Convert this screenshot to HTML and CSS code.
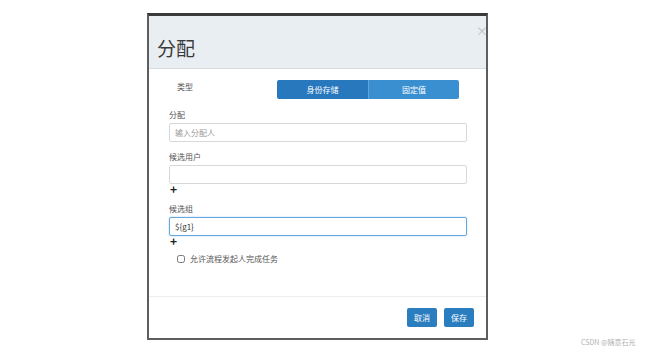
FILE: index.html
```html
<!DOCTYPE html>
<html lang="zh">
<head>
    <meta charset="UTF-8">
    <title>分配</title>
    <link rel="stylesheet" href="styles.css">
</head>
<body>
    <div class="page">
        <div class="dialog">
            <div class="dialog-header">
                <h1>分配</h1>
                <span class="close">×</span>
            </div>

            <div class="dialog-body">
                <div class="type-row">
                    <span class="type-label">类型</span>
                    <div class="btn-group">
                        <button class="seg active">身份存储</button>
                        <button class="seg">固定值</button>
                    </div>
                </div>

                <div class="field">
                    <label>分配</label>
                    <input type="text" placeholder="输入分配人">
                </div>

                <div class="field">
                    <label>候选用户</label>
                    <input type="text">
                    <span class="add">+</span>
                </div>

                <div class="field">
                    <label>候选组</label>
                    <input type="text" class="focus" value="${g1}">
                    <span class="add">+</span>
                </div>

                <label class="check">
                    <input type="checkbox">
                    <span>允许流程发起人完成任务</span>
                </label>
            </div>

            <div class="dialog-footer">
                <button class="btn">取消</button>
                <button class="btn">保存</button>
            </div>
        </div>
    </div>
    <div class="watermark">CSDN @随意石光</div>
</body>
</html>
```

FILE: styles.css
```css
body {
    margin: 0;
    background-color: #ffffff;
    font-family: "Noto Sans CJK SC", "Liberation Sans", sans-serif;
    color: #333;
}
.page {
    padding: 13px 0 0 147px;
}
.dialog {
    width: 337px;
    height: 322px;
    border: 2px solid #5e5e5e;
    border-top: 3px solid #3a3a3a;
    display: flex;
    flex-direction: column;
}
.dialog-header {
    height: 52px;
    background-color: #e9eef2;
    border-bottom: 1px solid #d5dbe0;
    display: flex;
    align-items: center;
    justify-content: space-between;
    position: relative;
}
.dialog-header h1 {
    margin: 10px 0 0 8px;
    font-size: 19px;
    font-weight: normal;
    color: #3a3a3a;
}
.close {
    position: absolute;
    top: 6px;
    right: -2px;
    font-size: 12px;
    color: #b8bec4;
}
.dialog-body {
    flex: 1;
    padding: 10px 20px 0 20px;
    border-bottom: 1px solid #eceff2;
}
.type-row {
    display: flex;
    align-items: flex-start;
    height: 28px;
}
.type-label {
    font-size: 8px;
    color: #555;
    margin: 2px 0 0 8px;
    width: 100px;
}
.btn-group {
    display: flex;
    margin-top: 1px;
}
.seg {
    width: 91px;
    height: 19px;
    border: none;
    border-radius: 0;
    background-color: #3a8fd0;
    color: #fff;
    font-family: inherit;
    font-size: 8px;
    padding: 0;
    border-left: 1px solid #5fa6dc;
}
.seg.active {
    background-color: #2878be;
    border-left: none;
    border-radius: 2px 0 0 2px;
}
.seg:last-child {
    border-radius: 0 2px 2px 0;
}
.field {
    margin-bottom: 7px;
}
.field label {
    display: block;
    font-size: 8px;
    color: #555;
    height: 16px;
    line-height: 16px;
}
.field input {
    display: block;
    width: 298px;
    height: 19px;
    box-sizing: border-box;
    border: 1px solid #d6d9dc;
    border-radius: 2px;
    font-family: inherit;
    font-size: 8px;
    padding: 0 5px;
    margin: 0;
    outline: none;
}
.field input::placeholder {
    color: #999;
}
.field input.focus {
    border-color: #66a9e0;
    box-shadow: 0 0 2px #a9cff0;
    color: #333;
}
.add {
    display: block;
    font-size: 12px;
    font-weight: bold;
    line-height: 10px;
    height: 10px;
    margin-left: 1px;
    color: #222;
}
.check {
    display: flex;
    align-items: center;
    margin: 2px 0 0 8px;
    font-size: 8px;
    color: #555;
}
.check input {
    width: 8px;
    height: 8px;
    margin: 0 5px 0 0;
}
.dialog-footer {
    height: 41px;
    display: flex;
    justify-content: flex-end;
    align-items: center;
    gap: 7px;
    padding-right: 12px;
}
.btn {
    width: 30px;
    height: 19px;
    border: none;
    border-radius: 2px;
    background-color: #2a7dbf;
    color: #fff;
    font-family: inherit;
    font-size: 8px;
    padding: 0;
}
.watermark {
    position: absolute;
    left: 581px;
    top: 337px;
    font-size: 7px;
    color: #b0b0b0;
}
```
